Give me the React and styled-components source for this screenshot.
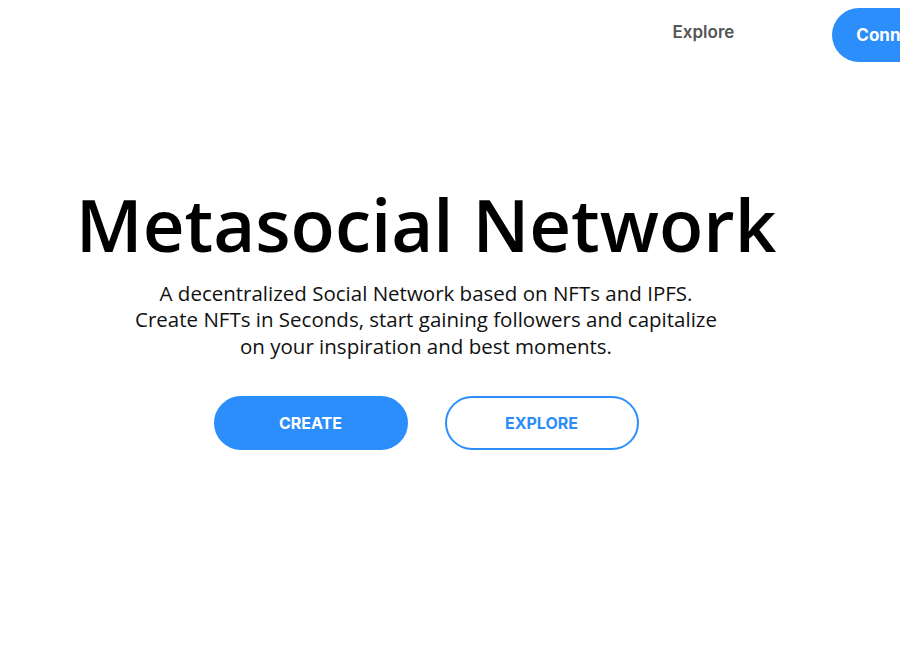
import styled, { createGlobalStyle } from 'styled-components';

const GlobalStyle = createGlobalStyle`
    html, body {
        margin: 0;
        padding: 0;
        background: #ffffff;
        overflow: hidden;
    }
`;

const Page = styled.div`
    width: 900px;
    height: 650px;
    overflow: hidden;
    display: flex;
    flex-direction: column;
`;

const Header = styled.header`
    display: flex;
    align-items: center;
    justify-content: flex-end;
    gap: 98px;
    height: 70px;
    margin-right: -107px;
`;

const NavLink = styled.a`
    margin-bottom: 6px;
    font-family: Inter, 'Liberation Sans', sans-serif;
    font-weight: 600;
    font-size: 17px;
    color: #555555;
    text-decoration: none;
    cursor: pointer;
`;

const ConnectButton = styled.button`
    height: 54px;
    padding: 0 24px;
    border: none;
    border-radius: 27px;
    background: #2b8efb;
    color: #ffffff;
    font-family: Inter, 'Liberation Sans', sans-serif;
    font-weight: 700;
    font-size: 17px;
    white-space: nowrap;
    cursor: pointer;
`;

const Hero = styled.section`
    display: flex;
    flex-direction: column;
    align-items: center;
    padding: 118px 48px 0 0;
`;

const Title = styled.h1`
    margin: 0;
    font-family: 'Open Sans', sans-serif;
    font-weight: 600;
    font-size: 72.6px;
    line-height: 1;
    color: #000000;
`;

const Subtitle = styled.p`
    margin: 19px 0 0;
    font-family: 'Open Sans', sans-serif;
    font-size: 20.5px;
    line-height: 26.5px;
    text-align: center;
    color: #111111;
`;

const Actions = styled.div`
    display: flex;
    gap: 37px;
    margin-top: 37px;
`;

const ActionButton = styled.button`
    width: 194px;
    height: 54px;
    border-radius: 27px;
    border: 2px solid #2b8efb;
    background: ${({ $outline }) => ($outline ? '#ffffff' : '#2b8efb')};
    color: ${({ $outline }) => ($outline ? '#2b8efb' : '#ffffff')};
    font-family: Inter, 'Liberation Sans', sans-serif;
    font-weight: 700;
    font-size: 16px;
    cursor: pointer;
`;

const App = () => {
    return (
        <Page>
            <GlobalStyle />
            <Header>
                <NavLink>Explore</NavLink>
                <ConnectButton>Connect Wallet</ConnectButton>
            </Header>
            <Hero>
                <Title>Metasocial Network</Title>
                <Subtitle>
                    A decentralized Social Network based on NFTs and IPFS.
                    <br />
                    Create NFTs in Seconds, start gaining followers and capitalize
                    <br />
                    on your inspiration and best moments.
                </Subtitle>
                <Actions>
                    <ActionButton>CREATE</ActionButton>
                    <ActionButton $outline>EXPLORE</ActionButton>
                </Actions>
            </Hero>
        </Page>
    );
};

export default App;
